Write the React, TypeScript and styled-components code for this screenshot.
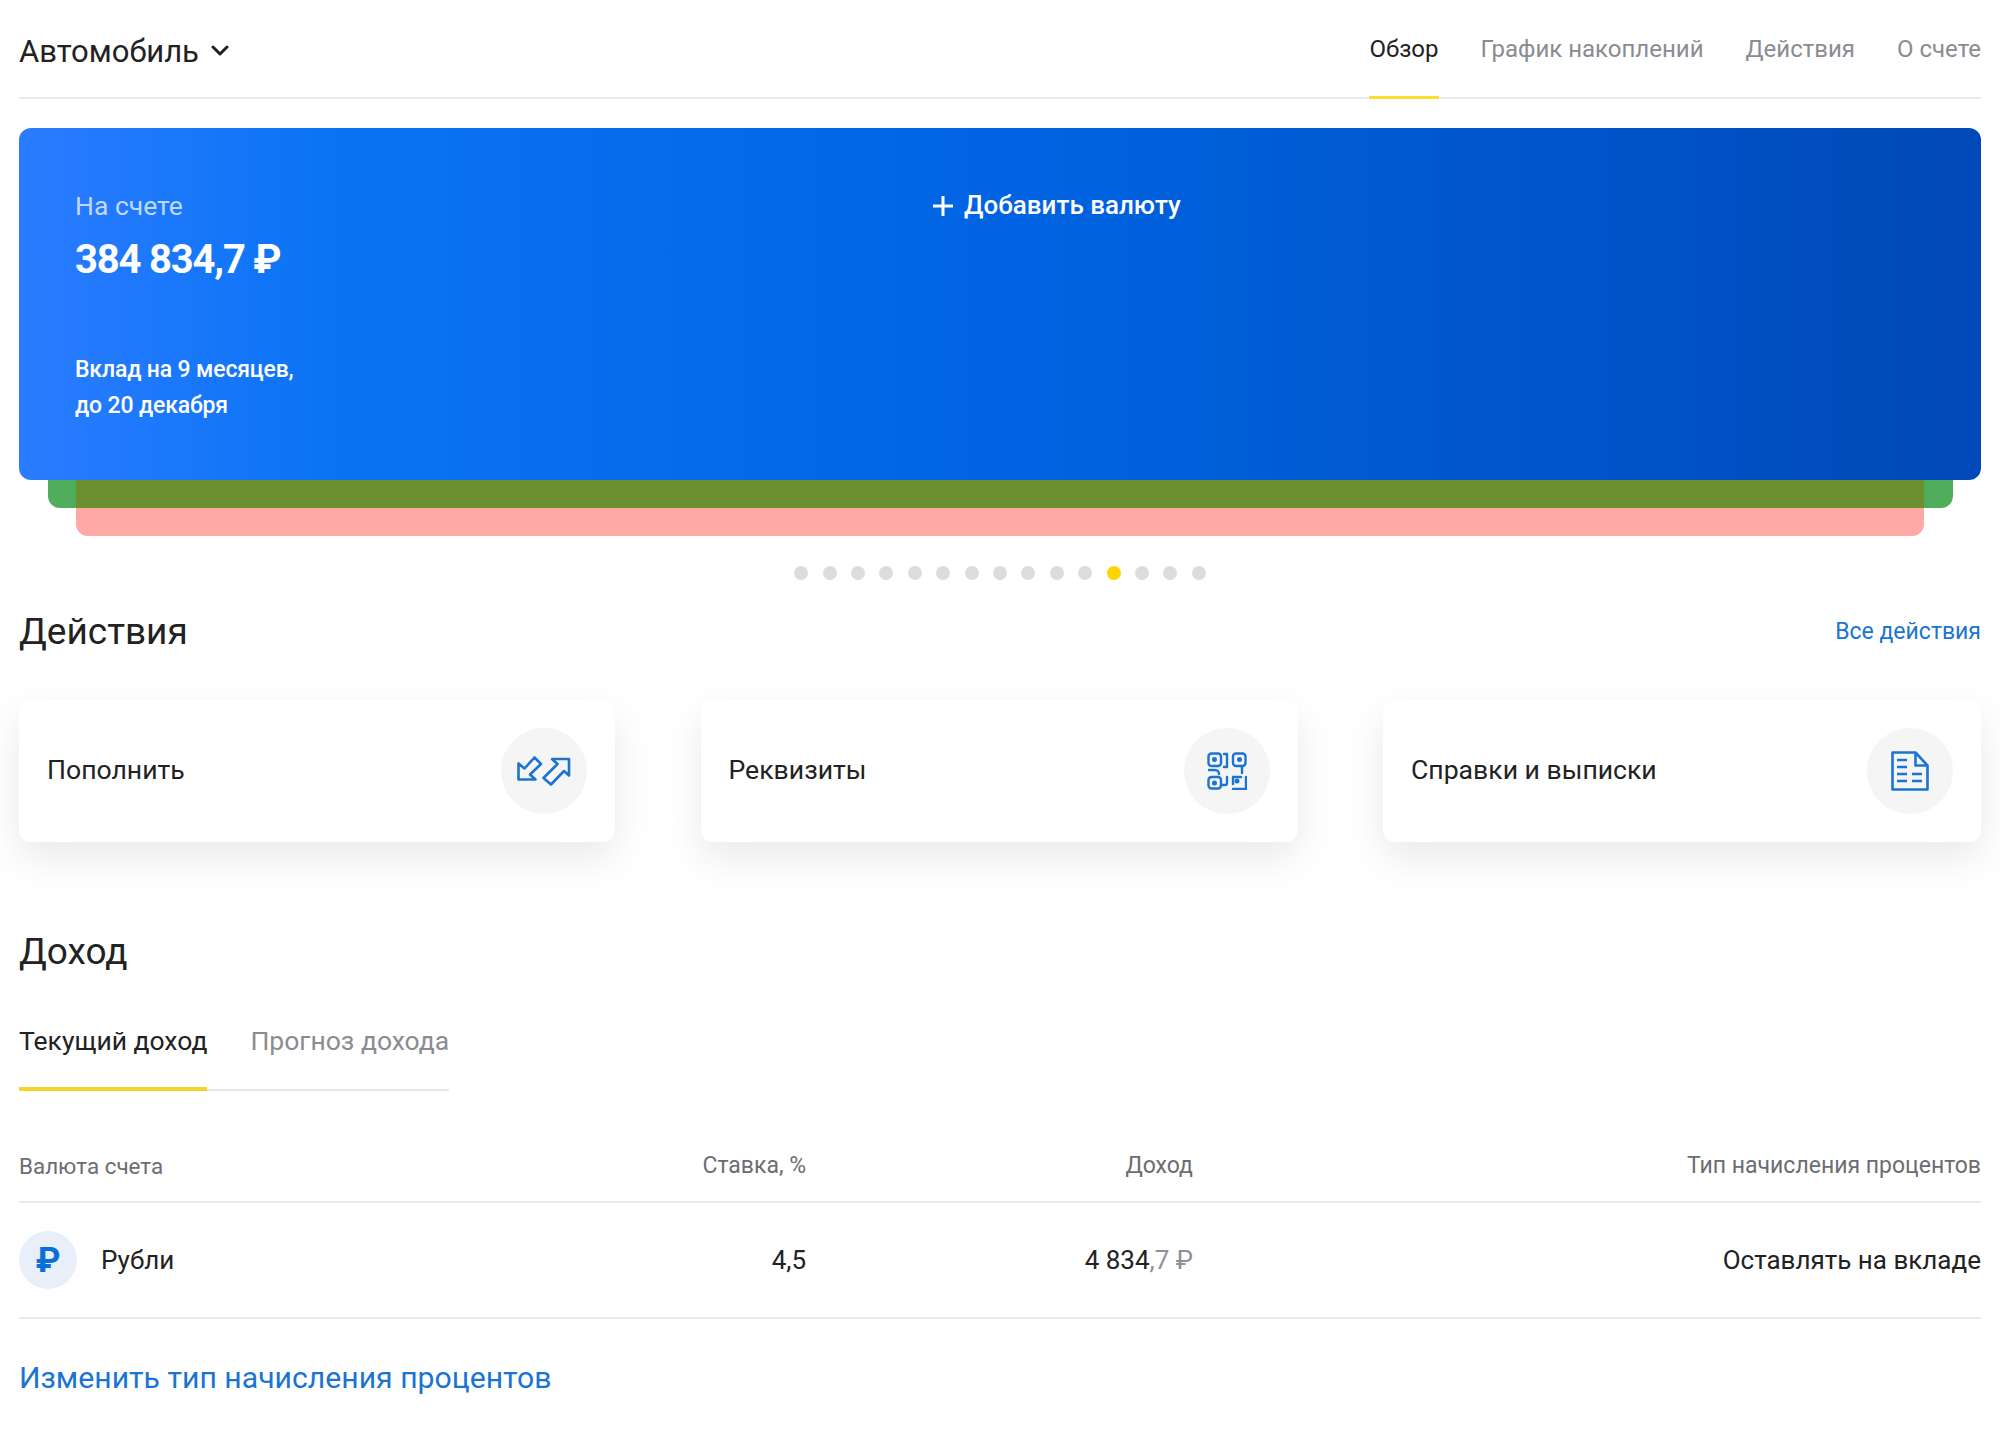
import React from 'react';
import styled, { createGlobalStyle } from 'styled-components';

const GlobalStyle = createGlobalStyle`
  body {
    margin: 0;
    background: #fff;
    color: #222;
    font-family: Roboto, "Noto Sans", sans-serif;
  }
`;

const blue = '#1a74d0';
const yellow = '#ffdd2d';

const Page = styled.div`
  width: 2000px;
  height: 1430px;
  box-sizing: border-box;
  padding: 0 19px;
  overflow: hidden;
`;

const Header = styled.header`
  display: flex;
  justify-content: space-between;
  height: 99px;
  box-sizing: border-box;
  border-bottom: 2px solid #ececec;
`;

const AccountTitle = styled.div`
  display: flex;
  align-items: center;
  gap: 12px;
  height: 102px;
  font-size: 31px;
`;

const Nav = styled.nav`
  display: flex;
  gap: 42px;
`;

const NavItem = styled.a<{ $active?: boolean }>`
  height: 99px;
  box-sizing: border-box;
  padding-top: 34px;
  font-size: 24px;
  line-height: 30px;
  color: ${(p) => (p.$active ? '#222' : '#8a8c92')};
  border-bottom: 3px solid ${(p) => (p.$active ? yellow : 'transparent')};
`;

const CardStack = styled.section`
  display: flex;
  flex-direction: column;
  margin-top: 29px;
`;

const BalanceCard = styled.div`
  z-index: 2;
  display: grid;
  grid-template-columns: 857px 1fr;
  height: 352px;
  box-sizing: border-box;
  padding: 57px 56px 0;
  border-radius: 12px;
  color: #fff;
  background: linear-gradient(90deg, #2b7cff 0%, #0a73f5 16%, #0064e2 50%, #0049b8 100%);
`;

const BalanceInfo = styled.div`
  display: flex;
  flex-direction: column;
`;

const BalanceLabel = styled.div`
  font-size: 26.5px;
  line-height: 41px;
  color: rgba(255, 255, 255, 0.72);
`;

const BalanceAmount = styled.div`
  margin-top: 8px;
  font-size: 40px;
  line-height: 52px;
  font-weight: 700;
  letter-spacing: -1.2px;
`;

const DepositTerm = styled.div`
  margin-top: 66px;
  font-size: 23px;
  line-height: 36px;
  font-weight: 500;
  letter-spacing: -0.15px;
`;

const AddCurrency = styled.div`
  display: flex;
  align-items: flex-start;
  gap: 10px;
  font-size: 26px;
  line-height: 41px;
  font-weight: 500;

  svg {
    flex: none;
    margin-top: 10px;
  }
`;

const GreenLayer = styled.div`
  z-index: 0;
  height: 40px;
  margin: -12px 28px 0 29px;
  border-radius: 0 0 12px 12px;
  background: #50ad5c;
`;

const PinkLayer = styled.div`
  z-index: 1;
  height: 56px;
  margin: -28px 57px 0;
  border-radius: 0 0 12px 12px;
  background: linear-gradient(180deg, #6b8f2e 28px, #ffa9a6 28px);
`;

const Dots = styled.div`
  display: flex;
  justify-content: center;
  gap: 14.4px;
  margin-top: 30px;
`;

const Dot = styled.span<{ $active?: boolean }>`
  width: 14px;
  height: 14px;
  border-radius: 50%;
  background: ${(p) => (p.$active ? '#ffd400' : '#dcdcdc')};
`;

const SectionHead = styled.div<{ $top: number }>`
  display: flex;
  justify-content: space-between;
  align-items: center;
  height: 50px;
  margin-top: ${(p) => p.$top}px;
`;

const SectionTitle = styled.h2`
  margin: 0;
  font-size: 37px;
  font-weight: 400;
`;

const AllActions = styled.a`
  font-size: 23px;
  color: ${blue};
`;

const ActionGrid = styled.div`
  display: grid;
  grid-template-columns: 596px 597px 1fr;
  column-gap: 85.5px;
  margin-top: 44px;
`;

const ActionCard = styled.div`
  display: flex;
  align-items: center;
  justify-content: space-between;
  height: 142px;
  box-sizing: border-box;
  padding: 0 28px;
  border-radius: 12px;
  background: #fff;
  font-size: 26.6px;
  line-height: 30px;
  box-shadow: 0 16px 40px rgba(0, 0, 0, 0.09);
`;

const ActionTitle = styled.span`
  margin-top: -2px;
`;

const IconCircle = styled.div`
  display: flex;
  align-items: center;
  justify-content: center;
  width: 86px;
  height: 86px;
  border-radius: 50%;
  background: #f5f5f6;
`;

const Tabs = styled.div`
  display: flex;
  width: fit-content;
  gap: 43px;
  margin-top: 24px;
  border-bottom: 2px solid #e6e6e6;
`;

const Tab = styled.a<{ $active?: boolean }>`
  height: 91px;
  margin-bottom: -2px;
  box-sizing: border-box;
  padding-top: 25px;
  font-size: 26.5px;
  line-height: 32px;
  color: ${(p) => (p.$active ? '#222' : '#8a8c92')};
  border-bottom: 4px solid ${(p) => (p.$active ? '#f5d327' : 'transparent')};
`;

const columns = '460px 327px 387px 1fr';

const TableHead = styled.div`
  display: grid;
  grid-template-columns: ${columns};
  padding: 61px 0 21px;
  font-size: 23px;
  line-height: 28px;
  color: #6b6d72;
  border-bottom: 2px solid #ececec;
`;

const TableRow = styled.div`
  display: grid;
  grid-template-columns: ${columns};
  align-items: center;
  height: 116px;
  box-sizing: border-box;
  font-size: 26px;
  border-bottom: 2px solid #ececec;
`;

const Cell = styled.div<{ $right?: boolean }>`
  text-align: ${(p) => (p.$right ? 'right' : 'left')};
`;

const CurrencyHead = styled(Cell)`
  font-size: 22.4px;
`;

const Currency = styled.div`
  display: flex;
  align-items: center;
  gap: 24px;
`;

const CurrencyBadge = styled.div`
  display: flex;
  align-items: center;
  justify-content: center;
  width: 58px;
  height: 58px;
  border-radius: 50%;
  background: #e9eff8;
  color: #0a6fd8;
  font-size: 35px;
  font-weight: 700;
`;

const Fraction = styled.span`
  color: #8e9095;
`;

const ChangeLink = styled.a`
  display: block;
  margin-top: 39px;
  font-size: 30.2px;
  line-height: 40px;
  color: ${blue};
`;

const Chevron = () => (
  <svg width="18" height="12" viewBox="0 0 18 12" fill="none">
    <path d="M2 2l7 7 7-7" stroke="#222" strokeWidth="3" strokeLinecap="round" strokeLinejoin="round" />
  </svg>
);

const Plus = () => (
  <svg width="22" height="22" viewBox="0 0 22 22" fill="none">
    <path d="M11 1v20M1 11h20" stroke="#fff" strokeWidth="3" />
  </svg>
);

const TransferIcon = () => (
  <svg width="54" height="30" viewBox="0 0 54 30" fill="none" stroke={blue} strokeWidth="2.6" strokeLinejoin="round">
    <path d="M1.500 7.500v16h17l-5.500-5L24 8l-6.500-6.500L7.500 12.500z" />
    <path d="M35 3h17v16.500l-5-4.500-13 13.500-7.500-6.500 14-14z" />
  </svg>
);

const QrIcon = () => (
  <svg width="40" height="38" viewBox="0 0 40 38" fill="none" stroke={blue} strokeWidth="2.4" strokeLinecap="round" strokeLinejoin="round">
    <rect x="1.500" y="1.500" width="12.500" height="12.500" rx="3" />
    <rect x="26" y="1.500" width="12.500" height="12.500" rx="3" />
    <rect x="1.500" y="25" width="12.500" height="11.500" rx="3" />
    <circle cx="7.500" cy="7.500" r="1.300" fill={blue} />
    <circle cx="32.500" cy="7.500" r="1.300" fill={blue} />
    <circle cx="7.500" cy="31" r="1.300" fill={blue} />
    <circle cx="30" cy="29" r="1.300" fill={blue} />
    <path d="M17 2h3v13h-3M35 14v7M2 18h6a4 4 0 0 1 4 4M15 33h3a2 2 0 0 0 2-2v-6M26 25h8M26 25v7M39 25v12H26" />
  </svg>
);

const DocumentIcon = () => (
  <svg width="38" height="40" viewBox="0 0 38 40" fill="none" stroke={blue} strokeWidth="2.6" strokeLinejoin="round">
    <path d="M1.500 1.500h23l12 13v24h-35z" />
    <path d="M24.500 1.500v13h12" />
    <path d="M6 9h10M6 16h10M6 23h10M21 23h10M6 30h10M21 30h10" />
  </svg>
);

const navItems = ['Обзор', 'График накоплений', 'Действия', 'О счете'];

const actions = [
  { title: 'Пополнить', icon: <TransferIcon /> },
  { title: 'Реквизиты', icon: <QrIcon /> },
  { title: 'Справки и выписки', icon: <DocumentIcon /> },
];

export default function App() {
  return (
    <Page>
      <GlobalStyle />
      <Header>
        <AccountTitle>
          Автомобиль
          <Chevron />
        </AccountTitle>
        <Nav>
          {navItems.map((item, i) => (
            <NavItem key={item} $active={i === 0}>
              {item}
            </NavItem>
          ))}
        </Nav>
      </Header>

      <CardStack>
        <BalanceCard>
          <BalanceInfo>
            <BalanceLabel>На счете</BalanceLabel>
            <BalanceAmount>384 834,7 ₽</BalanceAmount>
            <DepositTerm>
              Вклад на 9 месяцев,
              <br />
              до 20 декабря
            </DepositTerm>
          </BalanceInfo>
          <AddCurrency>
            <Plus />
            Добавить валюту
          </AddCurrency>
        </BalanceCard>
        <GreenLayer />
        <PinkLayer />
      </CardStack>

      <Dots>
        {Array.from({ length: 15 }, (_, i) => (
          <Dot key={i} $active={i === 11} />
        ))}
      </Dots>

      <SectionHead $top={26}>
        <SectionTitle>Действия</SectionTitle>
        <AllActions>Все действия</AllActions>
      </SectionHead>

      <ActionGrid>
        {actions.map((action) => (
          <ActionCard key={action.title}>
            <ActionTitle>{action.title}</ActionTitle>
            <IconCircle>{action.icon}</IconCircle>
          </ActionCard>
        ))}
      </ActionGrid>

      <SectionHead $top={84}>
        <SectionTitle>Доход</SectionTitle>
      </SectionHead>

      <Tabs>
        <Tab $active>Текущий доход</Tab>
        <Tab>Прогноз дохода</Tab>
      </Tabs>

      <TableHead>
        <CurrencyHead>Валюта счета</CurrencyHead>
        <Cell $right>Ставка, %</Cell>
        <Cell $right>Доход</Cell>
        <Cell $right>Тип начисления процентов</Cell>
      </TableHead>
      <TableRow>
        <Currency>
          <CurrencyBadge>₽</CurrencyBadge>
          Рубли
        </Currency>
        <Cell $right>4,5</Cell>
        <Cell $right>
          4 834<Fraction>,7 ₽</Fraction>
        </Cell>
        <Cell $right>Оставлять на вкладе</Cell>
      </TableRow>

      <ChangeLink>Изменить тип начисления процентов</ChangeLink>
    </Page>
  );
}
